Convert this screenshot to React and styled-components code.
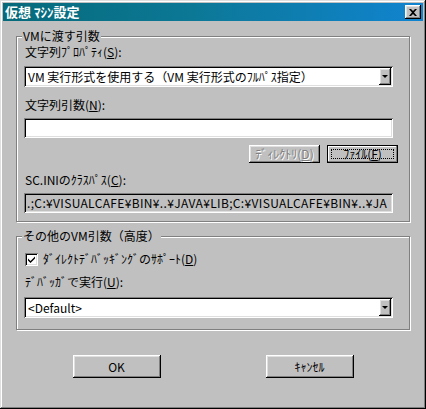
import React from 'react'
import styled, { createGlobalStyle, css } from 'styled-components'

const GlobalStyle = createGlobalStyle`
  html, body {
    margin: 0;
    padding: 0;
    background: #c0c0c0;
  }
  body {
    font-family: "Noto Sans CJK JP", "Noto Sans", sans-serif;
    font-size: 12px;
  }
`

const raised = css`
  box-shadow: inset -1px -1px #000, inset 1px 1px #fff,
    inset -2px -2px #808080, inset 2px 2px #dfdfdf;
`

const sunken = css`
  box-shadow: inset 1px 1px #808080, inset -1px -1px #fff,
    inset 2px 2px #000, inset -2px -2px #dfdfdf;
`

const Window = styled.div`
  width: 426px;
  height: 409px;
  box-sizing: border-box;
  padding: 3px;
  background: #c0c0c0;
  box-shadow: inset -1px -1px #000, inset 1px 1px #dfdfdf,
    inset -2px -2px #808080, inset 2px 2px #fff;
  display: flex;
  flex-direction: column;
  color: #000;
`

const TitleBar = styled.div`
  height: 18px;
  display: flex;
  align-items: center;
  justify-content: space-between;
  padding: 0 2px;
  background: linear-gradient(90deg, #066a7a 0%, #0c7896 45%, #1084d0 100%);
  color: #fff;
  font-weight: bold;
  font-size: 13px;
  line-height: 16px;
`

const CloseButton = styled.div`
  width: 16px;
  height: 14px;
  background: #c0c0c0;
  ${raised};
  display: flex;
  align-items: center;
  justify-content: center;
  padding-right: 1px;
  box-sizing: border-box;
`

const Body = styled.div`
  padding: 15px 13px 0 13px;
  display: flex;
  flex-direction: column;
`

const Group = styled.div`
  position: relative;
  height: ${p => p.$h}px;
  margin-top: ${p => p.$mt || 0}px;
  box-sizing: border-box;
  border: 1px solid #808080;
  box-shadow: inset 1px 1px #fff, 1px 1px #fff;
  padding: ${p => p.$pt}px 0 0 7px;
  display: flex;
  flex-direction: column;
  align-items: flex-start;
`

const Legend = styled.div`
  position: absolute;
  top: -8px;
  left: 5px;
  padding: 0 1px;
  background: #c0c0c0;
  line-height: 14px;
  white-space: nowrap;
`

const Label = styled.div`
  line-height: 14px;
  margin-top: ${p => p.$mt || 0}px;
  padding-left: 1px;
  white-space: nowrap;
`

const Combo = styled.div`
  width: 369px;
  height: 21px;
  margin-top: ${p => p.$mt || 0}px;
  box-sizing: border-box;
  padding: 2px;
  background: #fff;
  ${sunken};
  display: flex;
  align-items: center;
`

const ComboText = styled.div`
  flex: 1;
  padding-left: 2px;
  line-height: 16px;
  white-space: nowrap;
`

const ArrowButton = styled.div`
  width: 12px;
  height: 17px;
  box-sizing: border-box;
  background: #c0c0c0;
  ${raised};
  display: flex;
  align-items: center;
  justify-content: center;
`

const Arrow = styled.div`
  width: 0;
  height: 0;
  border-left: 3px solid transparent;
  border-right: 3px solid transparent;
  border-top: 3px solid #000;
`

const TextField = styled.div`
  width: 369px;
  height: 20px;
  margin-top: ${p => p.$mt || 0}px;
  box-sizing: border-box;
  padding: 2px 2px 0 3px;
  background: ${p => (p.$readOnly ? '#c0c0c0' : '#fff')};
  ${sunken};
  line-height: 16px;
  letter-spacing: 0.35px;
  white-space: nowrap;
  overflow: hidden;
`

const ButtonRow = styled.div`
  width: 374px;
  margin-top: ${p => p.$mt || 0}px;
  display: flex;
  justify-content: flex-end;
  gap: 7px;
`

const PushButton = styled.div`
  position: relative;
  width: ${p => p.$w}px;
  height: ${p => p.$h}px;
  box-sizing: border-box;
  background: #c0c0c0;
  display: flex;
  align-items: center;
  justify-content: center;
  line-height: 14px;
  white-space: nowrap;
  ${raised};
  ${p => p.$disabled && css`
    color: #808080;
    text-shadow: 1px 1px #fff;
  `}
  ${p => p.$default && css`
    border: 1px solid #000;
    box-shadow: inset -1px -1px #808080, inset 1px 1px #fff;
    &::after {
      content: '';
      position: absolute;
      inset: 3px;
      border: 1px dotted #000;
    }
  `}
`

const CheckRow = styled.div`
  display: flex;
  align-items: center;
  gap: 5px;
  padding-left: 1px;
  line-height: 14px;
  white-space: nowrap;
`

const CheckBox = styled.div`
  width: 13px;
  height: 13px;
  box-sizing: border-box;
  background: #fff;
  ${sunken};
  display: flex;
  align-items: center;
  justify-content: center;
`

const Footer = styled.div`
  margin-top: 25px;
  display: flex;
  justify-content: center;
  gap: 105px;
`

const Key = styled.span`
  text-decoration: underline;
`

const App = () => {
  return (
    <>
      <GlobalStyle />
      <Window>
        <TitleBar>
          <span>仮想 ﾏｼﾝ設定</span>
          <CloseButton>
            <svg width="8" height="7" viewBox="0 0 8 7">
              <path d="M0 0h2l2 2 2-2h2L5 3.5 8 7H6L4 5 2 7H0l3-3.5z" fill="#000" />
            </svg>
          </CloseButton>
        </TitleBar>
        <Body>
          <Group $h={186} $pt={8}>
            <Legend>VMに渡す引数</Legend>
            <Label>文字列ﾌﾟﾛﾊﾟﾃｨ(<Key>S</Key>):</Label>
            <Combo $mt={7}>
              <ComboText>VM 実行形式を使用する（VM 実行形式のﾌﾙﾊﾟｽ指定）</ComboText>
              <ArrowButton><Arrow /></ArrowButton>
            </Combo>
            <Label $mt={11}>文字列引数(<Key>N</Key>):</Label>
            <TextField $mt={6} />
            <ButtonRow $mt={7}>
              <PushButton $w={71} $h={18} $disabled>ﾃﾞｨﾚｸﾄﾘ(<Key>D</Key>)</PushButton>
              <PushButton $w={71} $h={18} $default>ﾌｧｲﾙ(<Key>F</Key>)</PushButton>
            </ButtonRow>
            <Label $mt={10}>SC.INIのｸﾗｽﾊﾟｽ(<Key>C</Key>):</Label>
            <TextField $mt={6} $readOnly>
              .;C:¥VISUALCAFE¥BIN¥..¥JAVA¥LIB;C:¥VISUALCAFE¥BIN¥..¥JA
            </TextField>
          </Group>
          <Group $h={94} $mt={14} $pt={15}>
            <Legend>その他のVM引数（高度）</Legend>
            <CheckRow>
              <CheckBox>
                <svg width="7" height="7" viewBox="0 0 7 7">
                  <path d="M0 2.5l2.5 2.5L7 0.5v2L2.5 7 0 4.5z" fill="#000" />
                </svg>
              </CheckBox>
              <span>ﾀﾞｲﾚｸﾄﾃﾞﾊﾞｯｷﾞﾝｸﾞのｻﾎﾟｰﾄ(<Key>D</Key>)</span>
            </CheckRow>
            <Label $mt={9}>ﾃﾞﾊﾞｯｶﾞで実行(<Key>U</Key>):</Label>
            <Combo $mt={8}>
              <ComboText>&lt;Default&gt;</ComboText>
              <ArrowButton><Arrow /></ArrowButton>
            </Combo>
          </Group>
        </Body>
        <Footer>
          <PushButton $w={88} $h={23}>OK</PushButton>
          <PushButton $w={88} $h={23}>ｷｬﾝｾﾙ</PushButton>
        </Footer>
      </Window>
    </>
  )
}

export default App
